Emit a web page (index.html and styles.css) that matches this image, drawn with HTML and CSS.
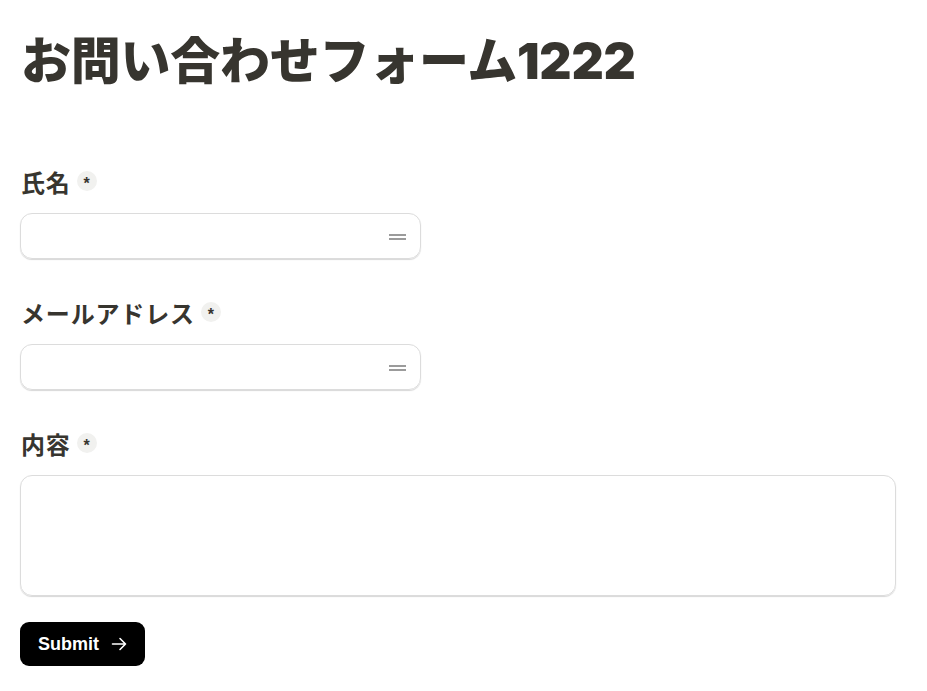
FILE: index.html
```html
<!DOCTYPE html>
<html lang="ja">
<head>
<meta charset="utf-8">
<title>お問い合わせフォーム1222</title>
<link rel="stylesheet" href="styles.css">
</head>
<body>
<main class="page">
  <h1 class="title">お問い合わせフォーム1222</h1>
  <form class="form">
    <div class="field">
      <label class="label"><span>氏名</span><span class="req">*</span></label>
      <div class="input">
        <svg class="pm" width="18" height="8" viewBox="0 0 18 8"><rect x="0" y="1" width="17" height="2" fill="#9b9b9b"/><rect x="0" y="5" width="17" height="2" fill="#9b9b9b"/></svg>
      </div>
    </div>
    <div class="field">
      <label class="label"><span>メールアドレス</span><span class="req">*</span></label>
      <div class="input">
        <svg class="pm" width="18" height="8" viewBox="0 0 18 8"><rect x="0" y="1" width="17" height="2" fill="#9b9b9b"/><rect x="0" y="5" width="17" height="2" fill="#9b9b9b"/></svg>
      </div>
    </div>
    <div class="field">
      <label class="label"><span>内容</span><span class="req">*</span></label>
      <div class="textarea"></div>
    </div>
    <button type="button" class="submit">Submit
      <svg width="16" height="16" viewBox="0 0 16 16" fill="none" stroke="#fff" stroke-width="1.6" stroke-linecap="round" stroke-linejoin="round"><path d="M1.5 8h13M9 2.5 14.5 8 9 13.5"/></svg>
    </button>
  </form>
</main>
</body>
</html>
```

FILE: styles.css
```css
* { box-sizing: border-box; }
html, body { margin: 0; padding: 0; background: #fff; }
body {
  font-family: "Noto Sans CJK JP", "Noto Sans", sans-serif;
  color: #37352f;
}
.page {
  padding: 31px 31px 0 20px;
}
.title {
  margin: 0 0 0 1px;
  font-family: "Inter", "Noto Sans CJK JP", sans-serif;
  font-size: 50px;
  line-height: 60px;
  font-weight: 900;
  letter-spacing: -0.005em;
  color: #37352f;
}
.form {
  margin-top: 74px;
  display: flex;
  flex-direction: column;
}
.field {
  display: flex;
  flex-direction: column;
  margin-bottom: 37px;
}
.field:last-of-type { margin-bottom: 26px; }
.label {
  display: flex;
  align-items: center;
  gap: 8px;
  height: 32px;
  margin: 0 0 16px 1px;
  font-size: 24px;
  font-weight: 700;
  letter-spacing: 0.035em;
  color: #37352f;
}
.label span:first-child { margin-right: -2px; }
.req {
  width: 20px;
  height: 20px;
  border-radius: 50%;
  background: #f1f1ef;
  display: flex;
  align-items: center;
  justify-content: center;
  font-family: "Liberation Sans", sans-serif;
  font-size: 16px;
  font-weight: 700;
  line-height: 1;
  letter-spacing: 0;
  padding-top: 5px;
  color: #37352f;
}
.input {
  width: 401px;
  height: 46px;
  border: 1px solid #dcdcdc;
  border-radius: 12px;
  box-shadow: 0 1px 1px rgba(0,0,0,0.16);
  display: flex;
  align-items: center;
  justify-content: flex-end;
  padding-right: 13px;
}
.pm { display: block; margin-top: 2px; }
.textarea {
  width: 100%;
  height: 121px;
  border: 1px solid #dcdcdc;
  border-radius: 12px;
  box-shadow: 0 1px 1px rgba(0,0,0,0.16);
}
.submit {
  align-self: flex-start;
  width: 125px;
  height: 44px;
  border: 0;
  border-radius: 9px;
  background: #000;
  color: #fff;
  font-family: "Liberation Sans", Arial, sans-serif;
  font-size: 18px;
  font-weight: 700;
  display: flex;
  align-items: center;
  gap: 12px;
  padding: 0 0 0 18px;
}
.submit svg { display: block; }
```
